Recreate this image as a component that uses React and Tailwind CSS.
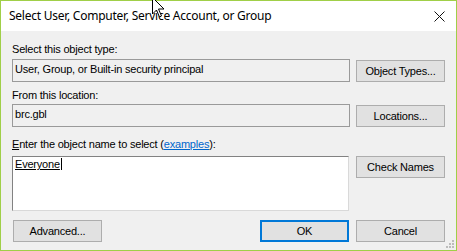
import React from 'react';

const font = { fontFamily: '"Liberation Sans", Arial, sans-serif', letterSpacing: '-0.2px' };

const DlgButton = ({ children, primary = false, className = '' }) => (
  <button
    className={`h-[22px] w-[89px] shrink-0 bg-[#e1e1e1] text-[11px] leading-none text-black ${
      primary ? 'border-2 border-[#0078d7]' : 'border border-[#adadad]'
    } ${className}`}
  >
    {children}
  </button>
);

const ReadOnlyField = ({ value }) => (
  <div className="h-[23px] w-[338px] border border-[#9a9a9a] bg-[#f0f0f0] px-[2px] text-[11px] leading-[19px] text-black">
    {value}
  </div>
);

const App = () => {
  return (
    <div className="relative h-[251px] w-[457px] overflow-hidden" style={font}>
      <div className="flex h-full w-full flex-col border border-[#a0cf48] bg-[#f0f0f0]">
        {/* title bar */}
        <div className="flex h-[30px] shrink-0 items-center justify-between bg-white pl-[8px] pr-[11px]">
          <span
            className="text-[12px] tracking-[-0.25px] text-black"
            style={{ fontFamily: '"Noto Sans", "Liberation Sans", sans-serif' }}
          >
            Select User, Computer, Service Account, or Group
          </span>
          <svg width="11" height="11" viewBox="0 0 11 11" className="mt-[1px]">
            <path d="M0.5 0.5 L10.5 10.5 M10.5 0.5 L0.5 10.5" stroke="#111" strokeWidth="1" />
          </svg>
        </div>

        {/* body */}
        <div className="flex flex-1 flex-col pl-[11px] pr-[11px] pt-[12px]">
          <div className="h-[13px] text-[11px] leading-[13px] text-black">Select this object type:</div>
          <div className="mt-[3px] flex items-start justify-between">
            <ReadOnlyField value="User, Group, or Built-in security principal" />
            <DlgButton className="mt-px">Object Types...</DlgButton>
          </div>

          <div className="mt-[7px] h-[13px] text-[11px] leading-[13px] text-black">From this location:</div>
          <div className="mt-[2px] flex items-start justify-between">
            <ReadOnlyField value="brc.gbl" />
            <DlgButton className="mt-px">Locations...</DlgButton>
          </div>

          <div className="mt-[11px] h-[13px] text-[11px] leading-[13px] text-black">
            <span className="underline">E</span>nter the object name to select (
            <span className="text-[#0066cc] underline">examples</span>):
          </div>
          <div className="mt-[5px] flex items-start justify-between">
            <div className="h-[55px] w-[337px] border border-[#828282] border-b-[#d9d9d9] border-r-[#d9d9d9] bg-white px-[2px] pt-px text-[11px] leading-[13px] text-black">
              <span className="border-r border-black pr-px underline">Everyone</span>
            </div>
            <DlgButton>Check Names</DlgButton>
          </div>

          <div className="mt-[9px] flex items-start">
            <DlgButton className="ml-px">Advanced...</DlgButton>
            <div className="flex-1" />
            <DlgButton primary className="w-[74px]">OK</DlgButton>
            <DlgButton className="ml-[7px] w-[74px]">Cancel</DlgButton>
          </div>
        </div>
      </div>

      {/* size grip */}
      <svg width="10" height="10" viewBox="0 0 10 10" className="absolute bottom-[2px] right-[2px]">
        <rect x="7" y="1" width="2" height="2" fill="#bcbcbc" />
        <rect x="4" y="4" width="2" height="2" fill="#bcbcbc" />
        <rect x="7" y="4" width="2" height="2" fill="#bcbcbc" />
        <rect x="1" y="7" width="2" height="2" fill="#bcbcbc" />
        <rect x="4" y="7" width="2" height="2" fill="#bcbcbc" />
        <rect x="7" y="7" width="2" height="2" fill="#bcbcbc" />
      </svg>

      {/* mouse pointer */}
      <svg width="14" height="22" viewBox="0 0 14 22" className="absolute left-[152px] top-[-3px]">
        <polygon
          points="0.5,0.5 0.5,17 4.5,13 7.5,20 9.5,19 6.5,12 12,12"
          fill="#fff"
          stroke="#000"
          strokeWidth="1"
        />
      </svg>
    </div>
  );
};

export default App;
